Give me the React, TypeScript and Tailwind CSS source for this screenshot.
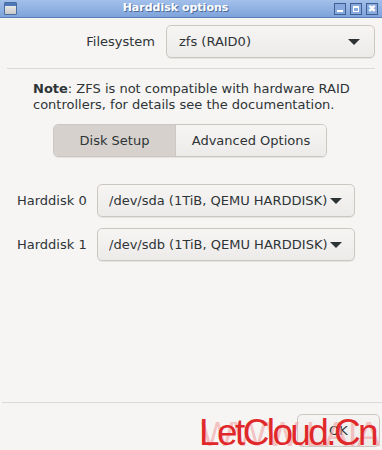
import React from "react";

const Caret = () => (
  <svg width="14" height="8" viewBox="0 0 14 8" className="shrink-0">
    <path d="M1 1h12L7 7z" fill="#2e3436" />
  </svg>
);

const Combo = ({ value, className }: { value: string; className: string }) => (
  <div
    className={`flex items-center justify-between rounded-[5px] border border-[#cdc7c2] bg-gradient-to-b from-[#f6f5f4] to-[#edebe9] shadow-[0_1px_0_rgba(0,0,0,0.07)] ${className}`}
  >
    <span className="truncate">{value}</span>
    <Caret />
  </div>
);

export default function App() {
  return (
    <div
      className="relative flex h-[450px] w-[382px] flex-col overflow-hidden bg-[#f6f5f4] text-[13px] text-[#2e3436]"
      style={{ fontFamily: '"DejaVu Sans", sans-serif' }}
    >
      {/* title bar */}
      <div className="flex h-[18px] items-center border-b border-[#5a7fb8] bg-gradient-to-b from-[#a3c0ea] to-[#7ea3db] px-[4px]">
        <div className="h-[13px] w-[13px] rounded-[1px] border border-[#4c6d9f] bg-gradient-to-b from-[#f4f4f4] to-[#c8c8c8] shadow-[inset_0_3px_0_#4d78b8]" />
        <div className="flex-1 text-center text-[11px] font-bold text-white [text-shadow:1px_1px_0_#4b6a99]">
          Harddisk options
        </div>
        <div className="flex gap-[4px]">
          {["min", "max", "close"].map((k) => (
            <div
              key={k}
              className="flex h-[12px] w-[12px] items-center justify-center border border-[#3f5f92] bg-[#88a9dd]"
            >
              {k === "min" && <div className="mt-[5px] h-[2px] w-[6px] bg-white" />}
              {k === "max" && <div className="h-[6px] w-[6px] border border-t-2 border-white" />}
              {k === "close" && <span className="text-[10px] font-bold leading-none text-white">✖</span>}
            </div>
          ))}
        </div>
      </div>

      {/* filesystem */}
      <div className="mt-[7px] flex items-center justify-end pr-[7px]">
        <span className="mr-[11px]">Filesystem</span>
        <Combo value="zfs (RAID0)" className="h-[33px] w-[209px] pl-[12px] pr-[13px]" />
      </div>
      <div className="mx-[7px] mt-[10px] h-px bg-[#dcd8d5]" />

      {/* note */}
      <div className="mt-[12px] pl-[33px] leading-[16px]">
        <div>
          <b>Note</b>: ZFS is not compatible with hardware RAID
        </div>
        <div>controllers, for details see the documentation.</div>
      </div>

      {/* tabs */}
      <div className="mt-[11px] flex justify-center pr-[2px]">
        <div className="flex h-[33px] overflow-hidden rounded-[5px] border border-[#cdc7c2] shadow-[0_1px_0_rgba(0,0,0,0.07)]">
          <div className="flex w-[121px] items-center justify-center bg-[#d6d1cd]">Disk Setup</div>
          <div className="flex w-[151px] items-center justify-center border-l border-[#cdc7c2] bg-gradient-to-b from-[#f6f5f4] to-[#edebe9]">
            Advanced Options
          </div>
        </div>
      </div>

      {/* disks */}
      <div className="mt-[27px] flex flex-col gap-[11px] pl-[17px]">
        {["sda", "sdb"].map((d, i) => (
          <div key={d} className="flex items-center">
            <span className="w-[80px]">Harddisk {i}</span>
            <Combo
              value={`/dev/${d} (1TiB, QEMU HARDDISK)`}
              className="h-[33px] w-[258px] pl-[11px] pr-[11px]"
            />
          </div>
        ))}
      </div>

      <div className="flex-1" />
      <div className="ml-[2px] h-px bg-[#dcd8d5]" />
      <div className="flex justify-end pb-[3px] pr-[2px] pt-[11px]">
        <div className="flex h-[33px] w-[83px] items-center justify-center rounded-[5px] border border-[#cdc7c2] bg-gradient-to-b from-[#f6f5f4] to-[#edebe9]">
          OK
        </div>
      </div>

      {/* watermark */}
      <div
        className="pointer-events-none absolute left-[201px] top-[416px] whitespace-nowrap text-[35px] leading-none tracking-[-0.5px] text-[#f2a0a0]/60"
        style={{ fontFamily: '"Liberation Sans", sans-serif' }}
      >
        WWW.LAIAIM
      </div>
      <div
        className="pointer-events-none absolute left-[199px] top-[414px] whitespace-nowrap text-[37px] leading-none tracking-[-2.6px] text-[#e0282a]"
        style={{ fontFamily: '"Liberation Sans", sans-serif' }}
      >
        LetCloud.Cn
      </div>
    </div>
  );
}
